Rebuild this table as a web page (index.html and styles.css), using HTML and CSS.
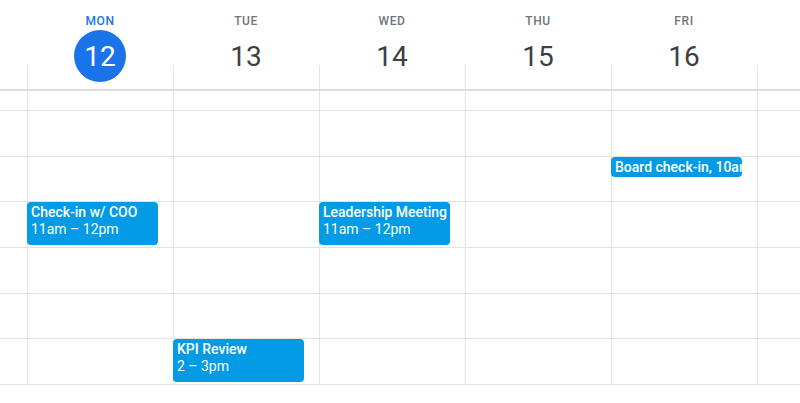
FILE: index.html
```html
<!DOCTYPE html>
<html>
<head>
<meta charset="utf-8">
<link rel="stylesheet" href="styles.css">
</head>
<body>
<div class="cal">
  <div class="header">
    <div class="gutter"></div>
    <div class="hcol today"><div class="dname">MON</div><div class="dnum">12</div></div>
    <div class="hcol"><div class="dname">TUE</div><div class="dnum">13</div></div>
    <div class="hcol"><div class="dname">WED</div><div class="dnum">14</div></div>
    <div class="hcol"><div class="dname">THU</div><div class="dnum">15</div></div>
    <div class="hcol"><div class="dname">FRI</div><div class="dnum">16</div></div>
    <div class="hcol rest"></div>
  </div>
  <div class="grid">
    <div class="gutter col">
      <div class="allday"></div>
      <div class="slot"></div><div class="slot"></div><div class="slot"></div><div class="slot"></div><div class="slot"></div><div class="slot"></div>
    </div>
    <div class="col day">
      <div class="allday"></div>
      <div class="slot"></div><div class="slot"></div>
      <div class="slot"><div class="event"><div class="title">Check-in w/ COO</div><div class="time">11am – 12pm</div></div></div>
      <div class="slot"></div><div class="slot"></div><div class="slot"></div>
    </div>
    <div class="col day">
      <div class="allday"></div>
      <div class="slot"></div><div class="slot"></div><div class="slot"></div><div class="slot"></div><div class="slot"></div>
      <div class="slot"><div class="event"><div class="title">KPI Review</div><div class="time">2 – 3pm</div></div></div>
    </div>
    <div class="col day">
      <div class="allday"></div>
      <div class="slot"></div><div class="slot"></div>
      <div class="slot"><div class="event"><div class="title">Leadership Meeting</div><div class="time">11am – 12pm</div></div></div>
      <div class="slot"></div><div class="slot"></div><div class="slot"></div>
    </div>
    <div class="col day">
      <div class="allday"></div>
      <div class="slot"></div><div class="slot"></div><div class="slot"></div><div class="slot"></div><div class="slot"></div><div class="slot"></div>
    </div>
    <div class="col day">
      <div class="allday"></div>
      <div class="slot"></div>
      <div class="slot"><div class="event short"><div class="title">Board check-in, 10am</div></div></div>
      <div class="slot"></div><div class="slot"></div><div class="slot"></div><div class="slot"></div>
    </div>
    <div class="col day rest">
      <div class="allday"></div>
      <div class="slot"></div><div class="slot"></div><div class="slot"></div><div class="slot"></div><div class="slot"></div><div class="slot"></div>
    </div>
  </div>
</div>
</body>
</html>
```

FILE: styles.css
```css
* { box-sizing: border-box; }
html, body { margin: 0; padding: 0; background: #fff; }
body { width: 800px; height: 403px; overflow: hidden; font-family: Roboto, "Liberation Sans", sans-serif; }

.cal { width: 800px; }

.header {
  display: flex;
  height: 91px;
  border-bottom: 2px solid #dcdcdc;
}
.header .gutter { width: 27px; flex: none; }
.hcol {
  position: relative;
  width: 146px;
  flex: none;
  display: flex;
  flex-direction: column;
  align-items: center;
}
.hcol.rest { flex: 1; width: auto; }
.hcol::before {
  content: "";
  position: absolute;
  left: 0;
  bottom: 0;
  height: 24px;
  border-left: 1px solid #e3e3e3;
}
.dname {
  margin-top: 14px;
  font-size: 12px;
  font-weight: 500;
  letter-spacing: 0.6px;
  line-height: 14px;
  color: #70757a;
}
.dnum {
  margin-top: 2px;
  width: 52px;
  height: 52px;
  border-radius: 50%;
  display: flex;
  align-items: center;
  justify-content: center;
  font-size: 28px;
  font-weight: 400;
  color: #3c4043;
}
.today .dname { color: #1a73e8; }
.today .dnum { background: #1a73e8; color: #fff; }

.grid { display: flex; }
.col { flex: none; display: flex; flex-direction: column; }
.gutter.col { width: 27px; }
.day { width: 146px; border-left: 1px solid #e3e3e3; }
.day.rest { flex: 1; width: auto; }
.allday { height: 20px; border-bottom: 1px solid #e3e3e3; }
.slot {
  height: 45.7px;
  border-bottom: 1px solid #e3e3e3;
  padding-right: 15px;
}

.event {
  margin-left: -1px;
  height: 43px;
  background: #039be5;
  border-radius: 4px;
  color: #fff;
  padding: 2px 4px 0;
  font-size: 14px;
  line-height: 16.5px;
  overflow: hidden;
  white-space: nowrap;
}
.event .title { font-weight: 500; }
.event .time { font-weight: 400; }
.event.short { height: 20px; padding-top: 1px; line-height: 18px; }
```
